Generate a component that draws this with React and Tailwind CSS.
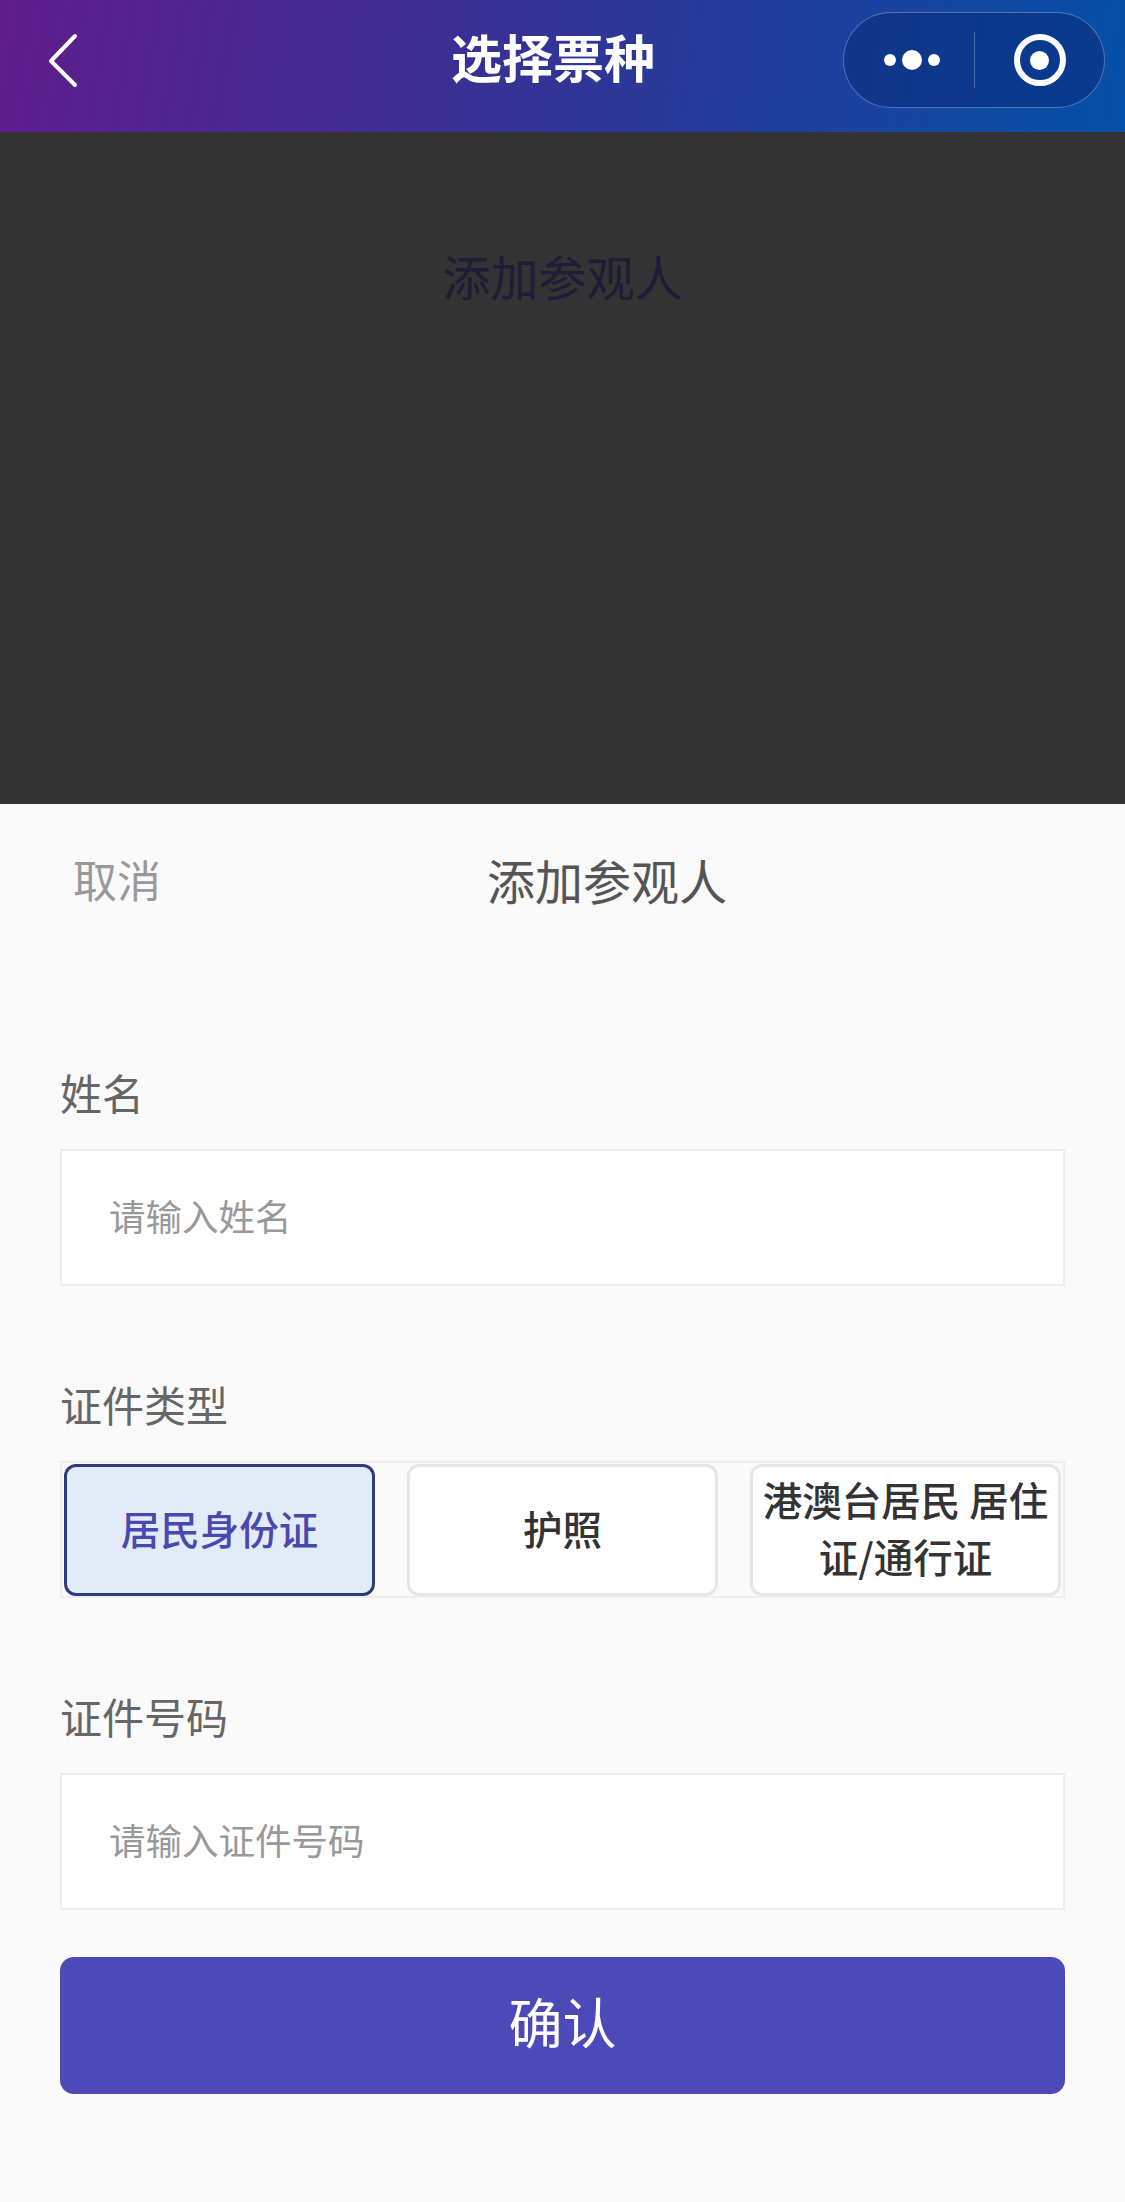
const FONT = "font-['Noto_Sans_CJK_SC','Noto_Sans',sans-serif]";

function Field({ label, placeholder, labelTop }) {
    return (
        <div className={labelTop}>
            <div className="h-[60px] pl-[60px] text-[42px] leading-[60px] text-[#666666]">{label}</div>
            <div className="mx-[60px] mt-[27px] flex h-[137px] items-center border-2 border-[#eeeeee] bg-white pb-[2px] pl-[47px] text-[36.5px] text-[#999999]">
                {placeholder}
            </div>
        </div>
    );
}

function TypeOption({ active, children }) {
    return (
        <div
            className={
                'flex h-[132px] w-[311px] items-center justify-center rounded-[12px] border-[3px] pb-[5px] text-center text-[39.5px] leading-[57px] font-medium ' +
                (active
                    ? 'border-[#2d3a7c] bg-[#e2ecf8] text-[#4a48b0]'
                    : 'border-[#e6e6e6] bg-white text-[#333333]')
            }
        >
            {children}
        </div>
    );
}

export default function App() {
    return (
        <div className={FONT + ' flex h-[2202px] w-[1125px] flex-col overflow-hidden bg-[#fafafa]'}>
            <header className="flex h-[132px] shrink-0 items-center bg-[linear-gradient(100deg,#5f1d8c_0%,#3a2f94_40%,#1f3f9c_70%,#0450a8_100%)] pb-[12px] text-white">
                <svg className="ml-[45px] h-[56px] w-[36px]" viewBox="0 0 36 56" fill="none" stroke="white" strokeWidth="4" strokeLinecap="round" strokeLinejoin="round">
                    <path d="M30 4 L6 29 L30 53" />
                </svg>
                <h1 className="mb-[8px] ml-[370px] text-[51px] leading-none font-bold">选择票种</h1>
                <div className="ml-auto mr-[20px] flex h-[96px] w-[262px] items-center rounded-full border border-white/30 bg-[#0a2f7d]/60">
                    <div className="flex w-[130px] items-center justify-center gap-[6px] pl-[6px]">
                        <span className="h-[12px] w-[12px] rounded-full bg-white" />
                        <span className="h-[20px] w-[20px] rounded-full bg-white" />
                        <span className="h-[12px] w-[12px] rounded-full bg-white" />
                    </div>
                    <div className="h-[56px] w-px bg-white/25" />
                    <div className="flex flex-1 items-center justify-center">
                        <div className="flex h-[52px] w-[52px] items-center justify-center rounded-full border-[6px] border-white">
                            <span className="h-[19px] w-[19px] rounded-full bg-white" />
                        </div>
                    </div>
                </div>
            </header>

            <div className="h-[672px] shrink-0 bg-[#333333] px-[62px] pt-[73px]">
                <div className="flex h-[140px] items-center justify-center border border-[#313131] text-[48px] text-[#1d1d35]">
                    添加参观人
                </div>
            </div>

            <div className="flex-1">
                <div className="flex h-[156px] items-center pb-[6px] pl-[73px]">
                    <span className="text-[44px] text-[#999999]">取消</span>
                    <span className="ml-[326px] text-[48px] text-[#555555]">添加参观人</span>
                </div>

                <Field label="姓名" placeholder="请输入姓名" labelTop="mt-[102px]" />

                <div className="mt-[88px] h-[60px] pl-[60px] text-[42px] leading-[60px] text-[#666666]">证件类型</div>
                <div className="mx-[60px] mt-[27px] flex h-[137px] items-center justify-between border-2 border-[#eeeeee] px-[2px]">
                    <TypeOption active>居民身份证</TypeOption>
                    <TypeOption>护照</TypeOption>
                    <TypeOption>港澳台居民 居住证/通行证</TypeOption>
                </div>

                <Field label="证件号码" placeholder="请输入证件号码" labelTop="mt-[88px]" />

                <button className="mx-[60px] mt-[47px] flex h-[137px] w-[1005px] items-center justify-center rounded-[14px] bg-[#4c4ab8] pb-[10px] text-[54px] text-white">
                    确认
                </button>
            </div>
        </div>
    );
}
